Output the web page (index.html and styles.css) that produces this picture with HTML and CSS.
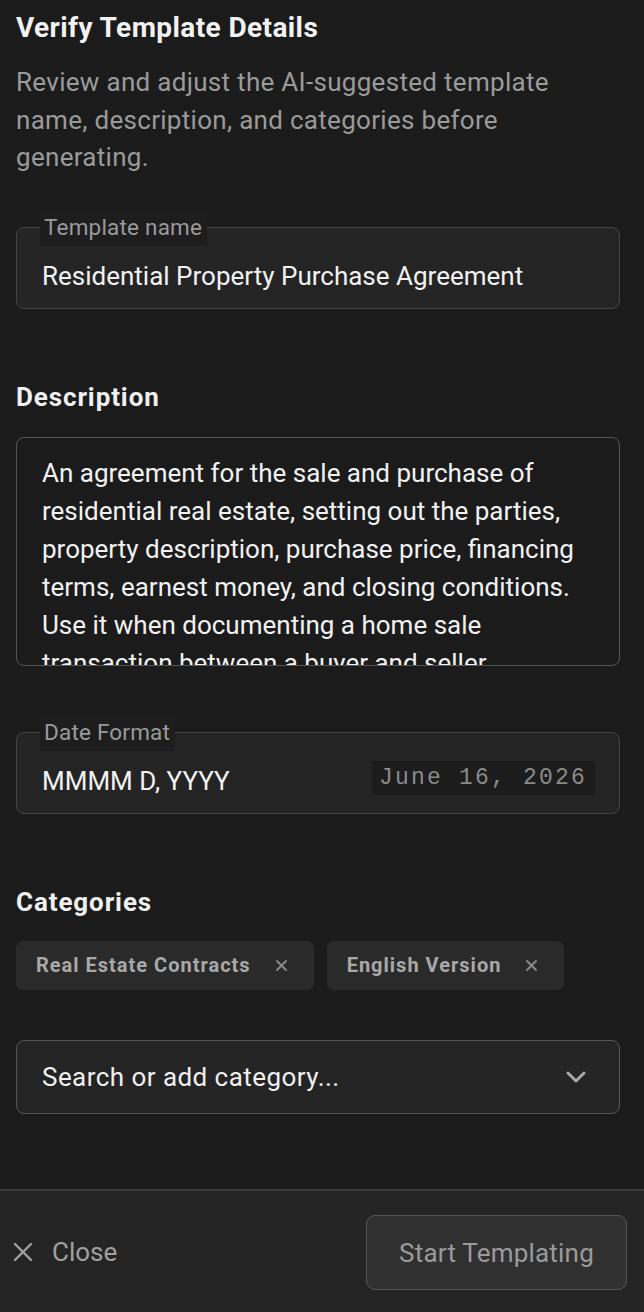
FILE: index.html
```html
<!DOCTYPE html>
<html lang="en">
<head>
  <meta charset="UTF-8" />
  <meta name="viewport" content="width=device-width, initial-scale=1.0"/>
  <title>Verify Template Details</title>
  <link rel="stylesheet" href="styles.css">
</head>
<body>
  <main class="sheet">
    <h1>Verify Template Details</h1>
    <p class="intro">Review and adjust the AI-suggested template name, description, and categories before generating.</p>

    <!-- Template name -->
    <div class="field name-field">
      <span class="field-label">Template name</span>
      <div class="field-value">Residential Property Purchase Agreement</div>
    </div>

    <h2 class="section-title">Description</h2>
    <div class="desc-box">
      <p>An agreement for the sale and purchase of residential real estate, setting out the parties, property description, purchase price, financing terms, earnest money, and closing conditions. Use it when documenting a home sale transaction between a buyer and seller.</p>
    </div>

    <!-- Date format -->
    <div class="field date-field">
      <span class="field-label">Date Format</span>
      <div class="field-value">MMMM D, YYYY</div>
      <code class="date-preview">June 16, 2026</code>
    </div>

    <h2 class="section-title">Categories</h2>
    <div class="chips">
      <span class="chip">Real Estate Contracts
        <svg class="chip-x" width="11" height="11" viewBox="0 0 11 11" fill="none" stroke="currentColor" stroke-width="1.8" stroke-linecap="round"><line x1="1" y1="1" x2="10" y2="10"/><line x1="10" y1="1" x2="1" y2="10"/></svg>
      </span>
      <span class="chip">English Version
        <svg class="chip-x" width="11" height="11" viewBox="0 0 11 11" fill="none" stroke="currentColor" stroke-width="1.8" stroke-linecap="round"><line x1="1" y1="1" x2="10" y2="10"/><line x1="10" y1="1" x2="1" y2="10"/></svg>
      </span>
    </div>

    <div class="search-box">
      <span>Search or add category...</span>
      <svg class="chevron" width="20" height="12" viewBox="0 0 20 12" fill="none" stroke="currentColor" stroke-width="3" stroke-linecap="round" stroke-linejoin="round"><polyline points="2 2 10 10 18 2"/></svg>
    </div>
  </main>

  <footer class="footer">
    <button class="close-btn">
      <svg width="20" height="20" viewBox="0 0 20 20" fill="none" stroke="currentColor" stroke-width="2.4" stroke-linecap="round"><line x1="2" y1="2" x2="18" y2="18"/><line x1="18" y1="2" x2="2" y2="18"/></svg>
      Close
    </button>
    <button class="start-btn">Start Templating</button>
  </footer>
</body>
</html>
```

FILE: styles.css
```css
html, body {
  margin: 0;
  padding: 0;
  background-color: #1b1b1b;
  height: 1312px;
  overflow: hidden;
}
body {
  font-family: Roboto, 'Liberation Sans', sans-serif;
  color: #f0f0f0;
  display: flex;
  flex-direction: column;
}
.sheet {
  flex: 1;
  padding: 0 24px 0 16px;
}
h1 {
  font-size: 28px;
  font-weight: 700;
  margin: 11px 0 0 0;
  line-height: 34px;
  letter-spacing: 0.4px;
  color: #f2f2f2;
}
.intro {
  margin: 19px 0 0 0;
  font-size: 26px;
  line-height: 37.5px;
  color: #9a9a9a;
  letter-spacing: 0.3px;
}
.field {
  position: relative;
  height: 82px;
  box-sizing: border-box;
  border: 1.5px solid #444;
  border-radius: 8px;
  background: #242424;
  display: flex;
  align-items: center;
  padding: 16px 24px 0 25px;
}
.name-field {
  margin-top: 50px;
}
.field-label {
  position: absolute;
  left: 23px;
  top: -16px;
  padding: 0 5px 4px 4px;
  background: #1d1d1d;
  color: #9a9a9a;
  font-size: 22.5px;
  line-height: 30px;
  letter-spacing: 0.2px;
}
.field-value {
  font-size: 26px;
  color: #f2f2f2;
}
.section-title {
  font-size: 26px;
  font-weight: 700;
  margin: 71px 0 0 0;
  line-height: 34px;
  letter-spacing: 0.9px;
  color: #f0f0f0;
}
.desc-box {
  margin-top: 23px;
  height: 229px;
  box-sizing: border-box;
  border: 1.5px solid #555;
  border-radius: 8px;
  overflow: hidden;
  padding: 16px 24px 0 25px;
}
.desc-box p {
  margin: 0;
  font-size: 26px;
  line-height: 38px;
  color: #f2f2f2;
}
.date-field {
  margin-top: 66px;
}
.date-field .field-value {
  flex: 1;
}
.date-preview {
  font-family: 'Liberation Mono', monospace;
  font-size: 23px;
  letter-spacing: 2.2px;
  color: #8a8a8a;
  background: #1c1c1c;
  padding: 2px 8px 2px 7px;
  line-height: 30px;
  margin-top: -5px;
}
.chips {
  display: flex;
  gap: 13px;
  margin-top: 22px;
}
.chip {
  display: flex;
  align-items: center;
  gap: 25px;
  height: 49px;
  padding: 0 27px 0 20px;
  background: #2a2a2a;
  border-radius: 7px;
  color: #a8a8a8;
  font-size: 20px;
  font-weight: 700;
  letter-spacing: 1px;
}
.chip-x {
  color: #8c8c8c;
}
.search-box {
  margin-top: 50px;
  height: 74px;
  box-sizing: border-box;
  border: 1.5px solid #555;
  border-radius: 8px;
  background: #242424;
  display: flex;
  align-items: center;
  justify-content: space-between;
  padding: 0 33px 0 25px;
  font-size: 26px;
  color: #f0f0f0;
  letter-spacing: 0.45px;
}
.chevron {
  color: #a8a8a8;
}
.footer {
  height: 123px;
  box-sizing: border-box;
  border-top: 2px solid #3a3a3a;
  background: #242424;
  display: flex;
  align-items: center;
  justify-content: space-between;
  padding: 0 17px 0 13px;
}
button {
  font-family: Roboto, 'Liberation Sans', sans-serif;
  cursor: pointer;
}
.close-btn {
  display: flex;
  align-items: center;
  gap: 19px;
  background: transparent;
  border: none;
  color: #a0a0a0;
  font-size: 26px;
  padding: 0;
}
.start-btn {
  width: 261px;
  height: 75px;
  background: #303030;
  border: 1.5px solid #555;
  border-radius: 9px;
  color: #9a9a9a;
  font-size: 26px;
  letter-spacing: 0.2px;
  margin-top: 2px;
}
```
